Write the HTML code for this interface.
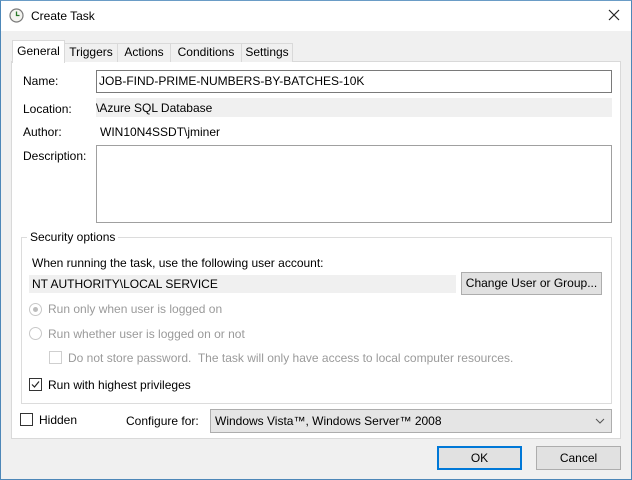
<!DOCTYPE html>
<html><head><style>
*{box-sizing:border-box;margin:0;padding:0}
body{width:632px;height:480px;position:relative;background:#f0f0f0;font-family:"Liberation Sans",sans-serif;font-size:12px;color:#000;overflow:hidden}
.a{position:absolute;white-space:nowrap}
.win{position:absolute;left:0;top:0;width:632px;height:480px;border:1px solid #4d87b8;border-top:1px solid #6a9cc6}
.title{left:1px;top:1px;width:630px;height:30px;background:#fff}
.tab{position:absolute;top:43px;height:19px;border:1px solid #d9d9d9;border-bottom:none;background:#f0f0f0;text-align:center;line-height:17px;font-size:12px}
.panel{left:11px;top:61px;width:610px;height:378px;background:#fff;border:1px solid #d9d9d9}
.gray{background:#f0f0f0}
.btn{position:absolute;background:#e1e1e1;border:1px solid #adadad;text-align:center}
.dis{color:#9a9a9a}
.cb{position:absolute;width:13px;height:13px;border:1px solid #333;background:#fff}
.rb{position:absolute;width:13px;height:13px;border:1px solid #c8c8c8;border-radius:50%;background:#fff}
</style></head><body>
<div class="win"></div>
<div class="a title"></div>
<svg class="a" style="left:9px;top:8px" width="15" height="15" viewBox="0 0 15 15"><circle cx="7.5" cy="7.5" r="6.5" fill="#f4f4f0" stroke="#7a7a7a" stroke-width="1.2"/><path d="M7.5 3.5V7.5H10.5" stroke="#2a7a2a" stroke-width="1.3" fill="none"/></svg>
<div class="a" style="left:31px;top:9px;font-size:12px">Create Task</div>
<svg class="a" style="left:608px;top:9px" width="12" height="12"><path d="M1 1L11 11M11 1L1 11" stroke="#222" stroke-width="1.2"/></svg>

<div class="a panel"></div>
<div class="tab" style="left:64px;width:54px">Triggers</div>
<div class="tab" style="left:117px;width:54px">Actions</div>
<div class="tab" style="left:170px;width:72px">Conditions</div>
<div class="tab" style="left:241px;width:52px">Settings</div>
<div class="tab" style="left:12px;top:40px;width:53px;height:23px;background:#fff;line-height:21px">General</div>

<div class="a" style="left:23px;top:74px">Name:</div>
<div class="a" style="left:96px;top:70px;width:516px;height:23px;border:1px solid #7a7a7a;padding:3px 2px;background:#fff">JOB-FIND-PRIME-NUMBERS-BY-BATCHES-10K</div>
<div class="a" style="left:23px;top:102px">Location:</div>
<div class="a gray" style="left:96px;top:98px;width:516px;height:19px;padding:3px 0 0">\Azure SQL Database</div>
<div class="a" style="left:23px;top:125px">Author:</div>
<div class="a" style="left:100px;top:125px">WIN10N4SSDT\jminer</div>
<div class="a" style="left:23px;top:149px">Description:</div>
<div class="a" style="left:96px;top:145px;width:516px;height:78px;border:1px solid #a0a0a0;background:#fff"></div>

<div class="a" style="left:21px;top:237px;width:591px;height:167px;border:1px solid #dcdcdc"></div>
<div class="a" style="left:27px;top:230px;background:#fff;padding:0 3px">Security options</div>
<div class="a" style="left:32px;top:256px">When running the task, use the following user account:</div>
<div class="a gray" style="left:29px;top:275px;width:427px;height:18px;padding:2px 3px">NT AUTHORITY\LOCAL SERVICE</div>
<div class="btn" style="left:461px;top:272px;width:141px;height:23px;line-height:21px">Change User or Group...</div>
<div class="rb" style="left:29px;top:303px"></div><div class="a" style="left:33px;top:307px;width:5px;height:5px;border-radius:50%;background:#bdbdbd"></div>
<div class="a dis" style="left:48px;top:302px">Run only when user is logged on</div>
<div class="rb" style="left:29px;top:327px"></div>
<div class="a dis" style="left:48px;top:327px">Run whether user is logged on or not</div>
<div class="cb" style="left:49px;top:351px;border-color:#cfcfcf"></div>
<div class="a dis" style="left:68px;top:351px">Do not store password.&nbsp; The task will only have access to local computer resources.</div>
<div class="cb" style="left:29px;top:378px"></div>
<svg class="a" style="left:30px;top:379px" width="11" height="11"><path d="M2 5.5L4.5 8L9 2.5" stroke="#222" stroke-width="1.2" fill="none"/></svg>
<div class="a" style="left:48px;top:378px">Run with highest privileges</div>

<div class="cb" style="left:20px;top:413px"></div>
<div class="a" style="left:39px;top:413px">Hidden</div>
<div class="a" style="left:126px;top:414px">Configure for:</div>
<div class="a" style="left:210px;top:409px;width:402px;height:24px;background:#e5e5e5;border:1px solid #adadad;padding:4px 4px">Windows Vista™, Windows Server™ 2008</div>
<svg class="a" style="left:595px;top:418px" width="10" height="6"><path d="M1 1L5 5L9 1" stroke="#555" fill="none"/></svg>

<div class="btn" style="left:437px;top:446px;width:85px;height:24px;line-height:20px;border:2px solid #0078d7">OK</div>
<div class="btn" style="left:536px;top:446px;width:85px;height:24px;line-height:22px">Cancel</div>
</body></html>
